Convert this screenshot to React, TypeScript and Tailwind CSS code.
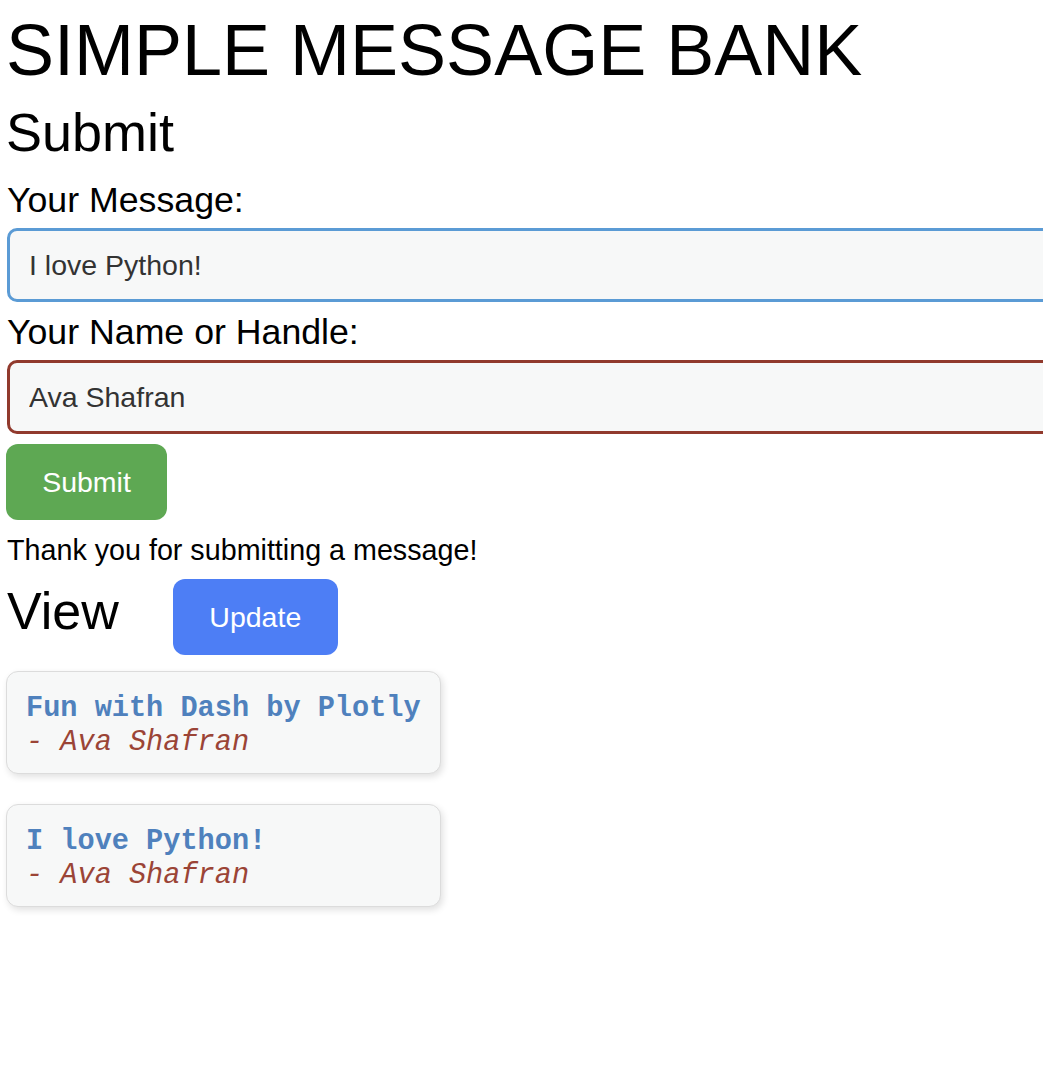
import { useState } from "react";

interface Message {
    id: number;
    text: string;
    author: string;
}

const initialMessages: Message[] = [
    { id: 1, text: "Fun with Dash by Plotly", author: "Ava Shafran" },
    { id: 2, text: "I love Python!", author: "Ava Shafran" },
];

const MessageCard = ({ message }: { message: Message }) => {
    return (
        <div className="rounded-[12px] border border-[#dcdcdc] bg-[#f7f8f8] pt-[20px] pb-[13px] px-[19px] shadow-[2px_3px_7px_rgba(0,0,0,0.12)] font-['Liberation_Mono',monospace] text-[28.6px] leading-[34px]">
            <div className="font-bold text-[#4f81bd] whitespace-pre">{message.text}</div>
            <div className="italic text-[#9b4436] whitespace-pre">- {message.author}</div>
        </div>
    );
};

export default function App() {
    const [message, setMessage] = useState("I love Python!");
    const [handle, setHandle] = useState("Ava Shafran");

    return (
        <div className="min-h-screen w-full overflow-hidden bg-white pl-[6px] text-black font-['Liberation_Sans',Arial,sans-serif]">
            <h1 className="text-[72px] leading-[100px] whitespace-nowrap">SIMPLE MESSAGE BANK</h1>
            <h2 className="text-[54px] leading-[64px]">Submit</h2>

            <label className="block mt-[16px] pl-[1px] text-[35.7px] leading-[40px]">Your Message:</label>
            <input
                value={message}
                onChange={(e) => setMessage(e.target.value)}
                className="mt-[8px] ml-[1px] block h-[74px] w-[1100px] rounded-[10px] border-[3px] border-[#5b9bd5] bg-[#f7f8f8] pl-[19px] text-[28.5px] text-[#333] outline-none"
            />

            <label className="block mt-[10px] pl-[1px] text-[35.7px] leading-[40px]">Your Name or Handle:</label>
            <input
                value={handle}
                onChange={(e) => setHandle(e.target.value)}
                className="mt-[8px] ml-[1px] block h-[74px] w-[1100px] rounded-[10px] border-[3px] border-[#913a2d] bg-[#f7f8f8] pl-[19px] text-[28.5px] text-[#333] outline-none"
            />

            <button className="mt-[10px] block h-[76px] w-[161px] rounded-[12px] bg-[#5ea853] text-[28.5px] text-white">
                Submit
            </button>

            <p className="mt-[12px] pl-[1px] text-[28.7px] leading-[36px]">Thank you for submitting a message!</p>

            <div className="mt-[11px] flex items-start gap-[54px]">
                <h2 className="pl-[1px] text-[52px] leading-[64px]">View</h2>
                <button className="h-[76px] w-[165px] rounded-[12px] bg-[#4d7ef5] text-[28.5px] text-white">
                    Update
                </button>
            </div>

            <div className="mt-[16px] flex w-fit flex-col gap-[30px]">
                {initialMessages.map((m) => (
                    <MessageCard key={m.id} message={m} />
                ))}
            </div>
        </div>
    );
}
